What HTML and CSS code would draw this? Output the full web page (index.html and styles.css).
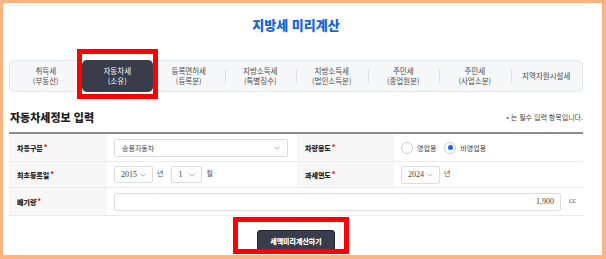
FILE: index.html
```html
<!DOCTYPE html>
<html lang="ko">
<head>
<meta charset="utf-8">
<title>지방세 미리계산</title>
<link rel="stylesheet" href="styles.css">
</head>
<body>
<div class="frame">
  <div class="prev"></div>
  <h1 class="title">지방세 미리계산</h1>
  <nav class="tabs">
    <a class="tab">취득세<br>(부동산)</a>
    <a class="tab active">자동차세<br>(소유)</a>
    <a class="tab">등록면허세<br>(등록분)</a>
    <a class="tab">지방소득세<br>(특별징수)</a>
    <a class="tab">지방소득세<br>(법인소득분)</a>
    <a class="tab">주민세<br>(종업원분)</a>
    <a class="tab">주민세<br>(사업소분)</a>
    <a class="tab">지역자원시설세</a>
  </nav>
  <div class="sect-head">
    <h2 class="sect-title">자동차세정보 입력</h2>
    <p class="note"><span class="dot">•</span> 는 필수 입력 항목입니다.</p>
  </div>
  <div class="form-table">
    <div class="row">
      <div class="th">차종구분<span class="req">*</span></div>
      <div class="td">
        <div class="select s-wide"><span>승용자동차</span><svg class="chev" width="6" height="4" viewBox="0 0 6 4"><polyline points="0.5,0.8 3,3.2 5.5,0.8" fill="none" stroke="#999" stroke-width="0.8"/></svg></div>
      </div>
      <div class="th">차량용도<span class="req">*</span></div>
      <div class="td">
        <label class="radio"><span class="circle"></span>영업용</label>
        <label class="radio on"><span class="circle"></span>비영업용</label>
      </div>
    </div>
    <div class="row">
      <div class="th">최초등록일<span class="req">*</span></div>
      <div class="td">
        <div class="select s-year"><span>2015</span><svg class="chev" width="6" height="4" viewBox="0 0 6 4"><polyline points="0.5,0.8 3,3.2 5.5,0.8" fill="none" stroke="#999" stroke-width="0.8"/></svg></div>
        <span class="unit">년</span>
        <div class="select s-month"><span>1</span><svg class="chev" width="6" height="4" viewBox="0 0 6 4"><polyline points="0.5,0.8 3,3.2 5.5,0.8" fill="none" stroke="#999" stroke-width="0.8"/></svg></div>
        <span class="unit">월</span>
      </div>
      <div class="th">과세연도<span class="req">*</span></div>
      <div class="td">
        <div class="select s-year"><span>2024</span><svg class="chev" width="6" height="4" viewBox="0 0 6 4"><polyline points="0.5,0.8 3,3.2 5.5,0.8" fill="none" stroke="#999" stroke-width="0.8"/></svg></div>
        <span class="unit">년</span>
      </div>
    </div>
    <div class="row row-full">
      <div class="th">배기량<span class="req">*</span></div>
      <div class="td">
        <div class="input">1,900</div>
        <span class="unit cc">cc</span>
      </div>
    </div>
  </div>
  <div class="actions">
    <div class="btn-wrap">
      <button class="calc" type="button">세액미리계산하기</button>
    </div>
  </div>
</div>
</body>
</html>
```

FILE: styles.css
```css
html, body {
  margin: 0;
  height: 100%;
  background: #ffb380;
}
body {
  font-family: "Noto Sans CJK KR", "Noto Sans", sans-serif;
  color: #333;
}
.frame {
  margin: 3px 4px 0 3px;
  height: 252px;
  background: #fff;
  overflow: hidden;
  padding: 0 19px 0 6px;
}
.prev {
  height: 2px;
  border-bottom: 1px solid #e8e9eb;
}
.title {
  margin: 0;
  padding-top: 10px;
  font-size: 13px;
  line-height: 18px;
  font-weight: 900;
  color: #1463d8;
  text-align: center;
}
.tabs {
  margin-top: 26px;
  height: 32px;
  box-sizing: border-box;
  border: 1px solid #e3e6ea;
  border-radius: 5px;
  background: #f5f7f9;
  display: grid;
  grid-template-columns: repeat(8, 1fr);
}
.tab {
  display: flex;
  align-items: center;
  justify-content: center;
  text-align: center;
  font-size: 7.5px;
  line-height: 10px;
  color: #4a4a4a;
  text-decoration: none;
}
.tab:nth-child(n+4) {
  background: linear-gradient(#dcdfe3, #dcdfe3) left center / 1px 13px no-repeat;
}
.tab.active {
  position: relative;
  background: #393c4b;
  color: #fff;
  border-radius: 5px;
  margin: -1px 0;
}
.tab.active::after {
  content: "";
  position: absolute;
  left: -5px;
  right: -5px;
  top: -11px;
  bottom: -7px;
  border: 5px solid #ff0000;
}
.sect-head {
  margin-top: 16px;
  display: flex;
  justify-content: space-between;
  align-items: center;
  height: 18px;
}
.sect-title {
  margin: 0 0 0 1px;
  font-size: 11px;
  line-height: 18px;
  font-weight: 900;
  color: #1e1e1e;
}
.note {
  margin: 0;
  font-size: 7px;
  color: #444;
}
.dot {
  color: #e02020;
}
.form-table {
  margin-top: 6px;
  border-top: 2px solid #8c8c8c;
}
.row {
  display: grid;
  grid-template-columns: 98px 190px 97px 1fr;
  border-bottom: 1px solid #ebebeb;
  height: 27px;
}
.row:nth-child(2) {
  height: 25px;
}
.row-full {
  grid-template-columns: 98px 1fr;
}
.th {
  background: #f7f7f7;
  display: flex;
  align-items: center;
  padding-left: 8px;
  font-size: 7px;
  font-weight: 900;
  color: #222;
}
.req {
  color: #e02020;
  margin-left: 1px;
  position: relative;
  top: -1px;
}
.td {
  display: flex;
  align-items: center;
  padding-left: 7px;
  font-size: 7.5px;
  color: #444;
}
.select {
  height: 18px;
  box-sizing: border-box;
  border: 1px solid #dcdcdc;
  border-radius: 2px;
  display: flex;
  align-items: center;
  justify-content: space-between;
  padding: 0 6px 0 6px;
  font-family: "Liberation Serif", "Noto Sans CJK KR", serif;
  font-size: 8px;
  color: #444;
  background: #fff;
}
.s-wide {
  width: 174px;
  padding-left: 7px;
  padding-right: 7px;
  font-family: "Noto Sans CJK KR", sans-serif;
  font-size: 7px;
}
.s-year {
  width: 39px;
  height: 17px;
}
.s-month {
  width: 31px;
  height: 17px;
}
.row:nth-child(2) .td:last-child .select {
  height: 18px;
}
.unit {
  margin: 0 8px 0 4px;
  font-size: 7px;
  color: #555;
  position: relative;
  top: -2px;
}
.radio {
  display: flex;
  align-items: center;
  margin-right: 8px;
  font-size: 7px;
  color: #444;
}
.circle {
  width: 12px;
  height: 12px;
  box-sizing: border-box;
  border: 1px solid #cfcfcf;
  border-radius: 50%;
  margin-right: 4px;
  display: flex;
  align-items: center;
  justify-content: center;
  background: #fff;
}
.radio.on .circle::before {
  content: "";
  width: 5px;
  height: 5px;
  border-radius: 50%;
  background: #1a66e0;
}
.input {
  width: 447px;
  height: 18px;
  box-sizing: border-box;
  border: 1px solid #dcdcdc;
  border-radius: 2px;
  display: flex;
  align-items: center;
  justify-content: flex-end;
  padding-right: 6px;
  font-family: "Liberation Serif", serif;
  font-size: 8px;
  color: #444;
}
.unit.cc {
  font-family: "Liberation Serif", serif;
  font-size: 8px;
  margin-left: 8px;
  top: -1px;
}
.actions {
  margin-top: 14px;
  display: flex;
  justify-content: center;
}
.btn-wrap {
  position: relative;
}
.btn-wrap::after {
  content: "";
  position: absolute;
  left: -24px;
  right: -14px;
  top: -13px;
  height: 37px;
  box-sizing: border-box;
  border: 5px solid #ff0000;
}
.calc {
  display: block;
  width: 78px;
  height: 24px;
  margin: 0;
  padding: 0 0 2px;
  border: 1px solid #23252f;
  border-radius: 3px;
  background: #393c4b;
  color: #fff;
  font-family: "Noto Sans CJK KR", sans-serif;
  font-size: 7px;
  font-weight: 900;
}
```
